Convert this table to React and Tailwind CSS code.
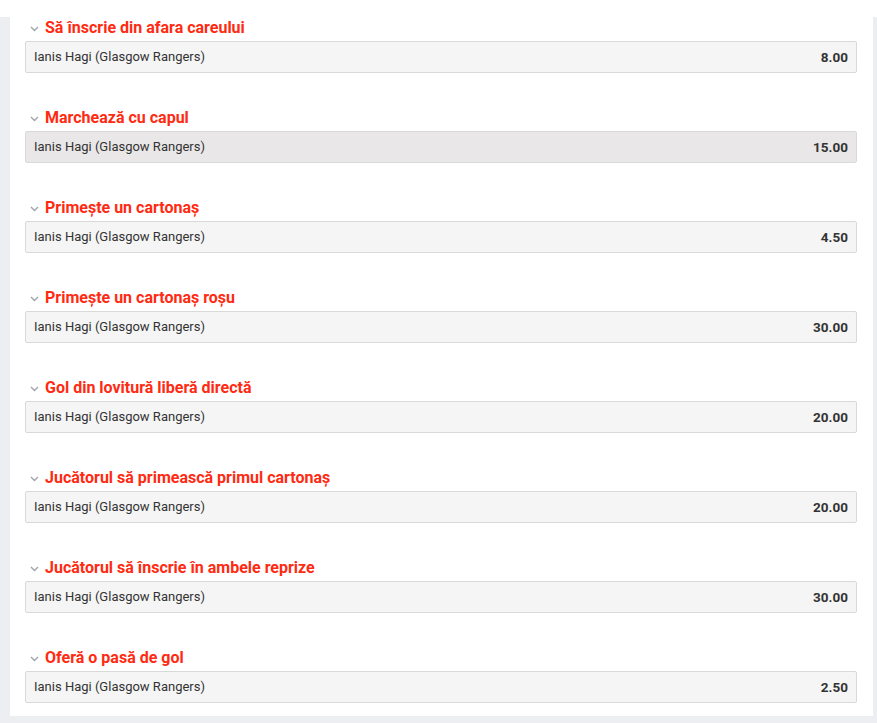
import React from "react";

const items = [
  ["Să înscrie din afara careului", "8.00", false],
  ["Marchează cu capul", "15.00", true],
  ["Primește un cartonaș", "4.50", false],
  ["Primește un cartonaș roșu", "30.00", false],
  ["Gol din lovitură liberă directă", "20.00", false],
  ["Jucătorul să primească primul cartonaș", "20.00", false],
  ["Jucătorul să înscrie în ambele reprize", "30.00", false],
  ["Oferă o pasă de gol", "2.50", false],
];

function Chevron() {
  return (
    <svg width="9" height="6" viewBox="0 0 9 6" className="shrink-0 mt-[2px]">
      <path d="M1 1l3.5 3.5L8 1" fill="none" stroke="#a0a4aa" strokeWidth="1.4" />
    </svg>
  );
}

export default function App() {
  return (
    <div className="min-h-[723px] bg-[#eceef1] pl-[10px] pr-[4px]" style={{ fontFamily: "Roboto, 'Liberation Sans', sans-serif" }}>
      <div className="bg-white pl-[15px] pr-[16px] pb-[13px]">
        {items.map(([title, odd, hl], i) => (
          <div key={i} className={i === items.length - 1 ? "" : "pb-[17px]"}>
            <div className="flex items-center h-[22px] mt-[17px] mb-[2px] pl-[5px] gap-[6px]">
              <Chevron />
              <span className="text-[16px] font-bold text-[#ff2a12] leading-[22px]">{title}</span>
            </div>
            <div className={`flex items-center justify-between h-[32px] border border-[#d9d9d9] rounded-[2px] px-[8px] ${hl ? "bg-[#e9e7e7]" : "bg-[#f5f5f5]"}`}>
              <span className="text-[13px] text-[#333]">Ianis Hagi (Glasgow Rangers)</span>
              <span className="text-[13.5px] font-bold text-[#333]">{odd}</span>
            </div>
          </div>
        ))}
      </div>
    </div>
  );
}
